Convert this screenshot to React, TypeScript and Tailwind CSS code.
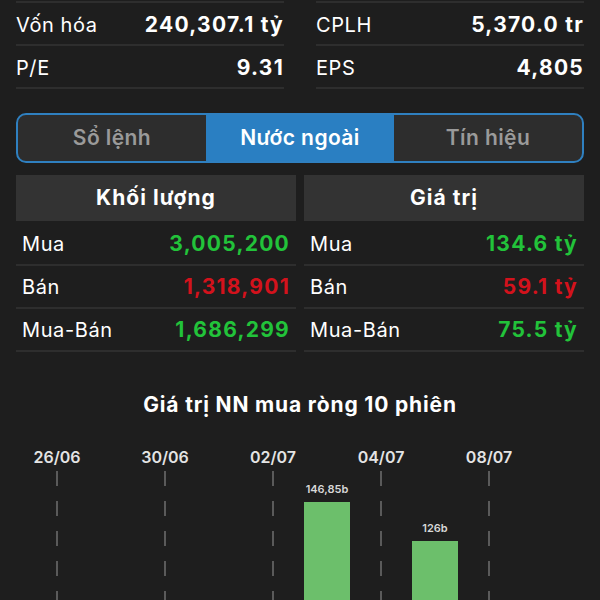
import React from 'react';

const stats = [
  [
    { label: 'Vốn hóa', value: '240,307.1 tỷ' },
    { label: 'P/E', value: '9.31' },
  ],
  [
    { label: 'CPLH', value: '5,370.0 tr' },
    { label: 'EPS', value: '4,805' },
  ],
];

const tabs = ['Sổ lệnh', 'Nước ngoài', 'Tín hiệu'];

const tables = [
  {
    title: 'Khối lượng',
    rows: [
      { label: 'Mua', value: '3,005,200', color: 'text-[#22c33a]' },
      { label: 'Bán', value: '1,318,901', color: 'text-[#d3121c]' },
      { label: 'Mua-Bán', value: '1,686,299', color: 'text-[#22c33a]' },
    ],
  },
  {
    title: 'Giá trị',
    rows: [
      { label: 'Mua', value: '134.6 tỷ', color: 'text-[#22c33a]' },
      { label: 'Bán', value: '59.1 tỷ', color: 'text-[#d3121c]' },
      { label: 'Mua-Bán', value: '75.5 tỷ', color: 'text-[#22c33a]' },
    ],
  },
];

const dates = ['26/06', '30/06', '02/07', '04/07', '08/07'];

const bars = [
  { x: 304, top: 502, label: '146,85b' },
  { x: 412, top: 541, label: '126b' },
];

function Chart() {
  return (
    <svg width="600" height="170" viewBox="0 430 600 170" className="block">
      {dates.map((d, i) => {
        const x = 57 + i * 108;
        return (
          <g key={d}>
            <text
              x={x}
              y={463}
              textAnchor="middle"
              fill="#e4e4e4"
              fontSize="16"
              fontWeight="600"
              fontFamily="Inter, sans-serif"
            >
              {d}
            </text>
            <line
              x1={x}
              y1={471}
              x2={x}
              y2={600}
              stroke="#5a5a5a"
              strokeWidth="2"
              strokeDasharray="15 15"
            />
          </g>
        );
      })}
      {bars.map((b) => (
        <g key={b.label}>
          <text
            x={b.x + 23}
            y={b.top - 9}
            textAnchor="middle"
            fill="#d8d8d8"
            fontSize="11"
            fontWeight="600"
            fontFamily="Inter, sans-serif"
          >
            {b.label}
          </text>
          <rect x={b.x} y={b.top} width="46" height={600 - b.top} fill="#6cbf6b" />
        </g>
      ))}
    </svg>
  );
}

export default function App() {
  return (
    <div className="w-[600px] h-[600px] overflow-hidden bg-[#1e1e1e] text-white font-['Inter',sans-serif]">
      <div className="grid grid-cols-2 gap-8 px-4 pt-px">
        {stats.map((col, i) => (
          <div key={i} className="border-t-2 border-[#2e2e2e]">
            {col.map((s) => (
              <div
                key={s.label}
                className="h-[43px] flex items-center justify-between border-b-2 border-[#2e2e2e] pt-[2px]"
              >
                <span className="text-[20px] tracking-[0.03em]">{s.label}</span>
                <span className="text-[21px] font-bold tracking-[0.06em]">{s.value}</span>
              </div>
            ))}
          </div>
        ))}
      </div>

      <div className="mx-4 mt-[24px] h-[50px] flex border-2 border-[#2f80c0] rounded-[10px] overflow-hidden bg-[#2d2d2d]">
        {tabs.map((t, i) => (
          <div
            key={t}
            className={
              i === 1
                ? 'flex-1 flex items-center justify-center bg-[#2a7fc2] text-white text-[21px] font-semibold tracking-[0.02em]'
                : 'flex-1 flex items-center justify-center text-[#9a9a9a] text-[21px] font-semibold tracking-[0.02em]'
            }
          >
            {t}
          </div>
        ))}
      </div>

      <div className="mx-4 mt-3 grid grid-cols-2 gap-2">
        {tables.map((tb) => (
          <div key={tb.title}>
            <div className="h-[46px] flex items-center justify-center bg-[#333333] text-[21px] font-bold tracking-[0.05em]">
              {tb.title}
            </div>
            <div className="pt-[2px]">
              {tb.rows.map((r) => (
                <div
                  key={r.label}
                  className="h-[43px] flex items-center justify-between px-[6px] border-b-2 border-[#2e2e2e]"
                >
                  <span className="text-[20px] tracking-[0.03em]">{r.label}</span>
                  <span className={`text-[21px] font-bold tracking-[0.06em] ${r.color}`}>{r.value}</span>
                </div>
              ))}
            </div>
          </div>
        ))}
      </div>

      <div className="mt-[37px] text-center text-[21px] font-bold tracking-[0.04em]">Giá trị NN mua ròng 10 phiên</div>

      <div className="mt-[9px]">
        <Chart />
      </div>
    </div>
  );
}
